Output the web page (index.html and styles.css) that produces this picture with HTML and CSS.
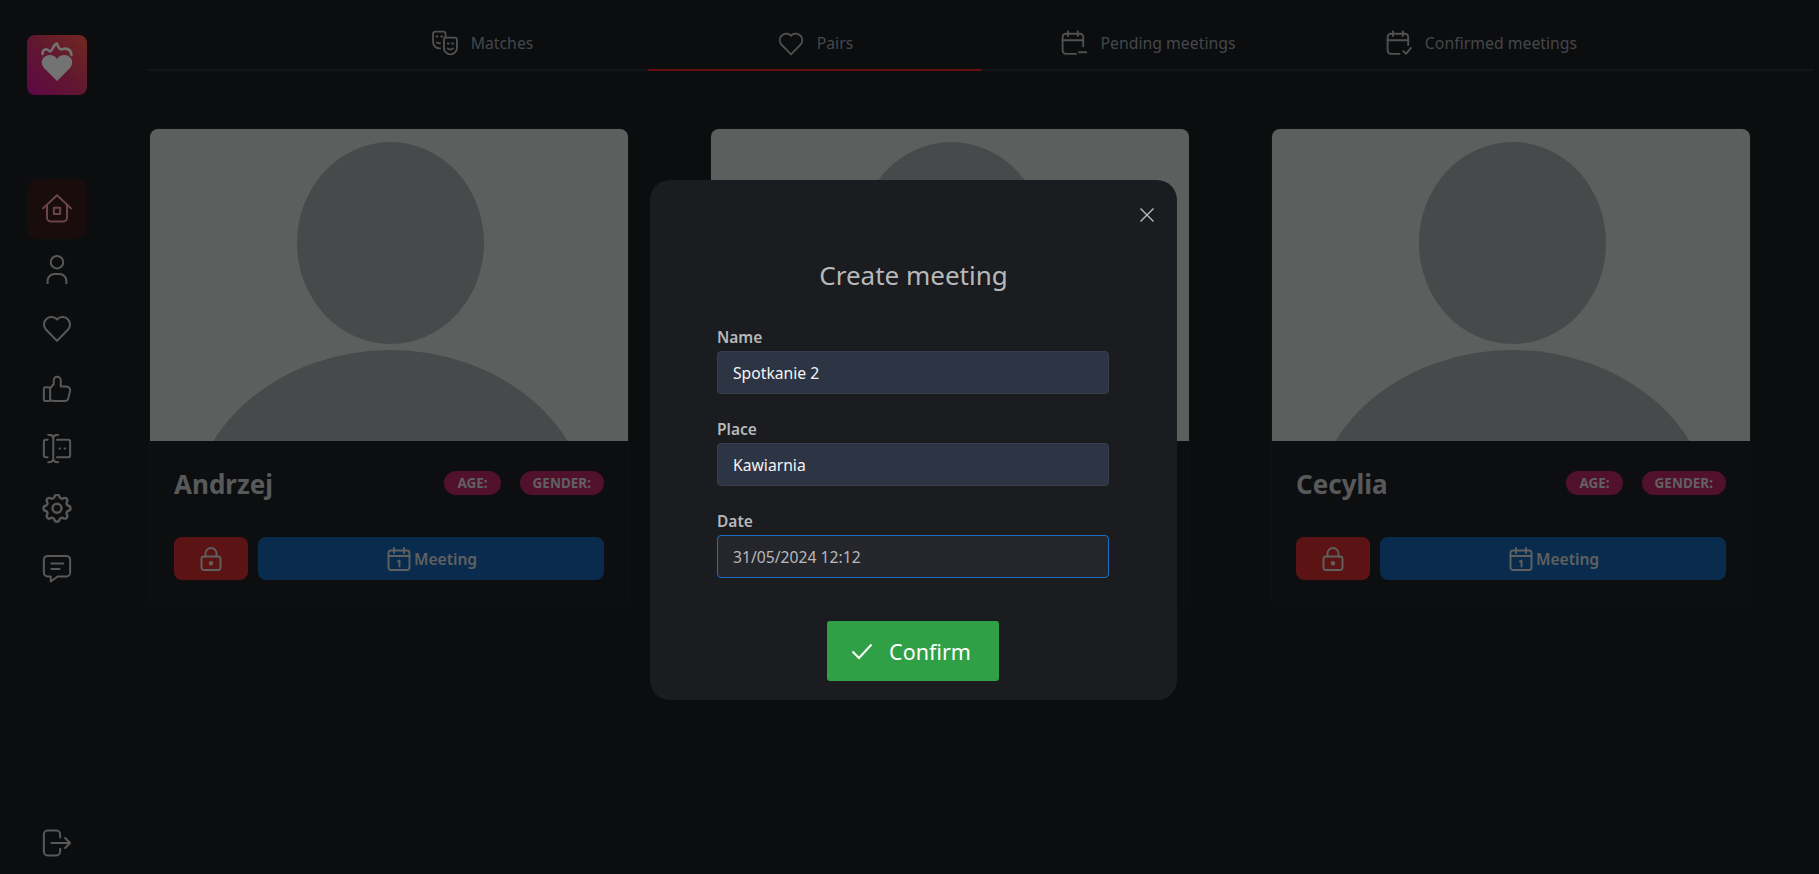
FILE: index.html
```html
<!DOCTYPE html>
<html>
<head>
    <title>Pairs</title>
    <link rel="stylesheet" href="styles.css">
</head>
<body>
    <div class="layout">
        <aside class="sidebar">
            <a class="logo">
                <svg viewBox="0 0 60 60" width="60" height="60">
                    <path class="logo-flame" d="M15.500 19C15.500 14.500 19 12.500 23 16.500C26 15.500 26 9.500 30 8.500C31 12 32 15 35 14.500C39 12.500 44 14 44.500 20"/>
                    <path class="logo-heart" d="M30 46L17 33C12 27 16 20 23 20C26 20 28 21 30 24C32 21 34 20 37 20C44 20 48 27 43 33Z"/>
                </svg>
            </a>
            <nav class="side-nav">
                <a class="side-item active">
                    <svg class="ico" viewBox="0 0 24 24"><path d="M0.800 11.500L12 1L23.200 11.500"/><path d="M4 8.500V19a3 3 0 0 0 3 3H17a3 3 0 0 0 3-3V8.500"/><rect x="9.500" y="11" width="5" height="5"/></svg>
                </a>
                <a class="side-item">
                    <svg class="ico" viewBox="0 0 24 24"><circle cx="12" cy="6.500" r="5"/><path d="M4.500 23.500V21.500a5.500 5.500 0 0 1 5.500-5.500H14a5.500 5.500 0 0 1 5.500 5.500V23.500"/></svg>
                </a>
                <a class="side-item">
                    <svg class="ico" viewBox="0 1 24 24"><path d="M12 22.500L2.800 13a6 6 0 0 1 8.400-8.400L12 5.400L12.800 4.600A6 6 0 0 1 21.200 13Z"/></svg>
                </a>
                <a class="side-item">
                    <svg class="ico" viewBox="0 0.500 24 24"><rect x="1.500" y="11" width="5" height="11" rx="1.200"/><path d="M6.500 21.500C8 22 9 22 10 22H18.500a2.500 2.500 0 0 0 2.500-2L22.500 14a3 3 0 0 0-3-3.500H15V5.500a2.800 2.800 0 0 0-5.600 0V8.500L6.500 12"/></svg>
                </a>
                <a class="side-item">
                    <svg class="ico" viewBox="0 0.500 24 24"><path d="M4.500 5H3a1.500 1.500 0 0 0-1.500 1.500V17.500A1.500 1.500 0 0 0 3 19H4.500"/><path d="M5 1C7.500 1 9 2 9 4V20C9 22 7.500 23 5 23M13 1C10.500 1 9 2 9 4M9 20C9 22 10.500 23 13 23"/><path d="M12 5H21a1.500 1.500 0 0 1 1.500 1.500V17.500A1.500 1.500 0 0 1 21 19H12"/><path d="M14 12h.5M18 12h.5"/></svg>
                </a>
                <a class="side-item">
                    <svg class="ico" viewBox="2 2.500 20 20"><path d="M10.325 4.317c.426 -1.756 2.924 -1.756 3.35 0a1.724 1.724 0 0 0 2.573 1.066c1.543 -.94 3.31 .826 2.37 2.37a1.724 1.724 0 0 0 1.065 2.572c1.756 .426 1.756 2.924 0 3.35a1.724 1.724 0 0 0 -1.066 2.573c.94 1.543 -.826 3.31 -2.37 2.37a1.724 1.724 0 0 0 -2.572 1.065c-.426 1.756 -2.924 1.756 -3.35 0a1.724 1.724 0 0 0 -2.573 -1.066c-1.543 .94 -3.31 -.826 -2.37 -2.37a1.724 1.724 0 0 0 -1.065 -2.572c-1.756 -.426 -1.756 -2.924 0 -3.35a1.724 1.724 0 0 0 1.066 -2.573c-.94 -1.543 .826 -3.31 2.37 -2.37c1 .608 2.296 .07 2.572 -1.065z"/><circle cx="12" cy="12" r="3"/></svg>
                </a>
                <a class="side-item">
                    <svg class="ico" viewBox="0 0 24 24"><path d="M4.500 1.500H19.500a3 3 0 0 1 3 3V15a3 3 0 0 1-3 3H12.500L7 22V18H4.500a3 3 0 0 1-3-3V4.500a3 3 0 0 1 3-3Z"/><path d="M7.500 7.500H17M7.500 12H14"/></svg>
                </a>
            </nav>
            <a class="side-item logout">
                <svg class="ico" viewBox="0 0 24 24"><path d="M14.500 7.500V5a3 3 0 0 0-3-3H4.500a3 3 0 0 0-3 3V19a3 3 0 0 0 3 3H11.500a3 3 0 0 0 3-3V16.500"/><path d="M7.500 12H22.500M18.500 8L22.500 12L18.500 16"/></svg>
            </a>
        </aside>

        <main class="content">
            <div class="tabs">
                <a class="tab">
                    <svg class="tab-ico" viewBox="0 0 24 24"><path d="M12.500 6V3.500a2 2 0 0 0-2-2H3a2 2 0 0 0-2 2V11a6 6 0 0 0 6.500 6"/><path d="M4 6h1M8.500 6h1M4.500 11.500c1 .8 2 1 3 .6"/><path d="M13 7H21a2 2 0 0 1 2 2V16.500a6 6 0 0 1-12 0V9a2 2 0 0 1 2-2Z"/><path d="M14.500 12.500h1M18.500 12.500h1M14.500 17c1.500 1.300 3.500 1.300 5 0"/></svg>
                    <span>Matches</span>
                </a>
                <a class="tab active">
                    <svg class="tab-ico" viewBox="0 0 24 24"><path d="M12 22.500L2.800 13a6 6 0 0 1 8.400-8.400L12 5.400L12.800 4.600A6 6 0 0 1 21.200 13Z"/></svg>
                    <span>Pairs</span>
                </a>
                <a class="tab">
                    <svg class="tab-ico" viewBox="0 0 24 24"><path d="M20.500 15V6.500a3 3 0 0 0-3-3H4.500a3 3 0 0 0-3 3V19a3 3 0 0 0 3 3H14"/><path d="M1.500 9.500H20.500M6.500 1V5.500M15.500 1V5.500M16.500 20.500H23.500"/></svg>
                    <span>Pending meetings</span>
                </a>
                <a class="tab">
                    <svg class="tab-ico" viewBox="0 0 24 24"><path d="M20.500 14V6.500a3 3 0 0 0-3-3H4.500a3 3 0 0 0-3 3V19a3 3 0 0 0 3 3H12.500"/><path d="M1.500 9.500H20.500M6.500 1V5.500M15.500 1V5.500M16 19.500L18.500 22L23 16.500"/></svg>
                    <span>Confirmed meetings</span>
                </a>
            </div>

            <div class="cards">
                <div class="card">
                    <svg class="photo" viewBox="0 0 478 312"><ellipse cx="240.500" cy="114" rx="93.500" ry="101"/><ellipse cx="240.500" cy="391" rx="200" ry="170"/></svg>
                    <div class="card-body">
                        <div class="card-head">
                            <span class="card-name">Andrzej</span>
                            <div class="badges"><span class="badge">AGE:</span><span class="badge">GENDER:</span></div>
                        </div>
                        <div class="card-actions">
                            <button class="btn btn-lock"><svg class="btn-ico" viewBox="0 0 24 24"><path d="M6.500 9.500V6.500a5.500 5.500 0 0 1 11 0V9.500"/><rect x="2.500" y="9.500" width="19" height="13.500" rx="2.500"/><circle class="dot" cx="12" cy="16.200" r="1.300"/></svg></button>
                            <button class="btn btn-meeting"><svg class="btn-ico" viewBox="0 0 24 24"><rect x="1.500" y="3.500" width="21" height="19.500" rx="2.500"/><path d="M1.500 9H22.500M7 1V6M17 1V6M11 14.500L12.500 13.500V19.500"/></svg>Meeting</button>
                        </div>
                    </div>
                </div>
                <div class="card">
                    <svg class="photo" viewBox="0 0 478 312"><ellipse cx="240.500" cy="114" rx="93.500" ry="101"/><ellipse cx="240.500" cy="391" rx="200" ry="170"/></svg>
                    <div class="card-body">
                        <div class="card-head">
                            <span class="card-name">Bartek</span>
                            <div class="badges"><span class="badge">AGE:</span><span class="badge">GENDER:</span></div>
                        </div>
                        <div class="card-actions">
                            <button class="btn btn-lock"><svg class="btn-ico" viewBox="0 0 24 24"><path d="M6.500 9.500V6.500a5.500 5.500 0 0 1 11 0V9.500"/><rect x="2.500" y="9.500" width="19" height="13.500" rx="2.500"/><circle class="dot" cx="12" cy="16.200" r="1.300"/></svg></button>
                            <button class="btn btn-meeting"><svg class="btn-ico" viewBox="0 0 24 24"><rect x="1.500" y="3.500" width="21" height="19.500" rx="2.500"/><path d="M1.500 9H22.500M7 1V6M17 1V6M11 14.500L12.500 13.500V19.500"/></svg>Meeting</button>
                        </div>
                    </div>
                </div>
                <div class="card">
                    <svg class="photo" viewBox="0 0 478 312"><ellipse cx="240.500" cy="114" rx="93.500" ry="101"/><ellipse cx="240.500" cy="391" rx="200" ry="170"/></svg>
                    <div class="card-body">
                        <div class="card-head">
                            <span class="card-name">Cecylia</span>
                            <div class="badges"><span class="badge">AGE:</span><span class="badge">GENDER:</span></div>
                        </div>
                        <div class="card-actions">
                            <button class="btn btn-lock"><svg class="btn-ico" viewBox="0 0 24 24"><path d="M6.500 9.500V6.500a5.500 5.500 0 0 1 11 0V9.500"/><rect x="2.500" y="9.500" width="19" height="13.500" rx="2.500"/><circle class="dot" cx="12" cy="16.200" r="1.300"/></svg></button>
                            <button class="btn btn-meeting"><svg class="btn-ico" viewBox="0 0 24 24"><rect x="1.500" y="3.500" width="21" height="19.500" rx="2.500"/><path d="M1.500 9H22.500M7 1V6M17 1V6M11 14.500L12.500 13.500V19.500"/></svg>Meeting</button>
                        </div>
                    </div>
                </div>
            </div>
        </main>
    </div>

    <div class="backdrop"></div>
    <div class="modal-wrap">
        <div class="modal">
            <button class="modal-close"><svg viewBox="0 0 14 14" width="14" height="14"><path d="M0.500 0.500L13.500 13.500M13.500 0.500L0.500 13.500"/></svg></button>
            <h2 class="modal-title">Create meeting</h2>
            <form class="meeting-form">
                <label class="field-label" for="meetingName">Name</label>
                <input class="field" type="text" id="meetingName" value="Spotkanie 2">
                <label class="field-label" for="meetingPlace">Place</label>
                <input class="field" type="text" id="meetingPlace" value="Kawiarnia">
                <label class="field-label" for="meetingDate">Date</label>
                <input class="field field-focus" type="text" id="meetingDate" value="31/05/2024 12:12">
                <button type="button" class="btn-confirm"><svg viewBox="0 0 22 18" width="22" height="18"><path d="M1.500 9.500L8 16L20.500 2.500"/></svg>Confirm</button>
            </form>
        </div>
    </div>
</body>
</html>
```

FILE: styles.css
```css
* {
    box-sizing: border-box;
}

body {
    margin: 0;
    height: 100vh;
    overflow: hidden;
    font-family: "Noto Sans", "Open Sans", sans-serif;
    background: #191d22;
    color: #d0d0d0;
}

.layout {
    display: flex;
    height: 100vh;
}

/* sidebar */
.sidebar {
    width: 148px;
    flex: none;
    display: flex;
    flex-direction: column;
    padding: 35px 0 1px 27px;
}

.logo {
    display: block;
    width: 60px;
    height: 60px;
    border-radius: 8px;
    background: linear-gradient(to top right, #d0109c, #d6346a 50%, #fb5a48);
}

.logo svg {
    display: block;
}

.logo-flame {
    fill: none;
    stroke: #fff;
    stroke-width: 2.500;
    stroke-linecap: round;
    stroke-linejoin: round;
}

.logo-heart {
    fill: #fff;
}

.side-nav {
    margin-top: 84px;
}

.side-item {
    width: 60px;
    height: 60px;
    display: flex;
    align-items: center;
    justify-content: center;
    border-radius: 10px;
    color: #c4c4c4;
}

.side-item.active {
    background: #361b1b;
    color: #f09c9c;
}

.logout {
    margin-top: auto;
}

.ico {
    width: 30px;
    height: 30px;
    fill: none;
    stroke: currentColor;
    stroke-width: 1.600;
    stroke-linecap: round;
    stroke-linejoin: round;
}

/* tabs */
.content {
    flex: 1;
    padding-right: 5px;
}

.tabs {
    display: flex;
    justify-content: center;
    height: 71px;
    border-bottom: 2px solid #2b2f35;
}

.tab {
    width: 333px;
    height: 71px;
    display: flex;
    align-items: center;
    justify-content: center;
    gap: 13px;
    padding: 17px 0 0 2px;
    font-size: 15.800px;
    color: #989da4;
    border-bottom: 2px solid transparent;
}

.tab.active {
    border-bottom-color: #e81f26;
}

.tab-ico {
    width: 26px;
    height: 26px;
    fill: none;
    stroke: #b4b4b4;
    stroke-width: 1.700;
    stroke-linecap: round;
    stroke-linejoin: round;
}

/* cards */
.cards {
    display: flex;
    gap: 81px;
    margin: 57px 0 0 1px;
}

.card {
    width: 480px;
    border: 1px solid #24262a;
    border-radius: 9px;
    background: #1e2024;
    overflow: hidden;
}

.photo {
    display: block;
    width: 478px;
    height: 312px;
    background: #cfd3d1;
    fill: #a0a2a4;
}

.card-body {
    padding: 20px 24px 26px;
}

.card-head {
    display: flex;
    align-items: center;
    justify-content: space-between;
    height: 44px;
    margin-bottom: 32px;
}

.card-name {
    padding-top: 2px;
    font-size: 26px;
    font-weight: 700;
    color: #c4c6c8;
}

.badges {
    display: flex;
    gap: 19px;
}

.badge {
    height: 24px;
    line-height: 24px;
    padding: 0 13px;
    border-radius: 12px;
    background: #b42462;
    font-size: 13.500px;
    font-weight: 700;
    color: #d4d4d4;
}

.card-actions {
    display: flex;
    gap: 10px;
}

.btn {
    height: 43px;
    display: flex;
    align-items: center;
    justify-content: center;
    border: none;
    border-radius: 8px;
    font-family: inherit;
    font-size: 15.600px;
    font-weight: 600;
    color: #d4d4d4;
}

.btn-lock {
    width: 74px;
    background: #ca2c2c;
}

.btn-meeting {
    flex: 1;
    gap: 3px;
    padding-left: 8px;
    background: #1260ad;
}

.btn-ico {
    width: 24px;
    height: 24px;
    fill: none;
    stroke: currentColor;
    stroke-width: 1.900;
    stroke-linecap: round;
    stroke-linejoin: round;
}

.btn-ico .dot {
    fill: currentColor;
}

/* modal */
.backdrop {
    position: fixed;
    inset: 0;
    background: rgba(0, 0, 0, 0.55);
}

.modal-wrap {
    position: fixed;
    inset: 0;
    display: flex;
    align-items: flex-start;
    justify-content: center;
    padding: 180px 0 0 8px;
}

.modal {
    position: relative;
    width: 527px;
    height: 520px;
    padding-top: 77px;
    border-radius: 20px;
    background: #1a1c20;
}

.modal-close {
    position: absolute;
    top: 28px;
    right: 23px;
    width: 14px;
    height: 14px;
    padding: 0;
    border: none;
    background: none;
}

.modal-close svg {
    display: block;
    fill: none;
    stroke: #bbbcbe;
    stroke-width: 1.400;
}

.modal-title {
    margin: 0 0 33px;
    height: 36px;
    line-height: 36px;
    text-align: center;
    font-size: 26px;
    font-weight: 400;
    color: #b7b8ba;
}

.meeting-form {
    width: 392px;
    margin: 0 0 0 67px;
    display: flex;
    flex-direction: column;
}

.field-label {
    height: 21px;
    line-height: 23px;
    margin-bottom: 4px;
    font-size: 15.500px;
    font-weight: 600;
    color: #b7b8ba;
}

.field {
    width: 100%;
    height: 43px;
    margin-bottom: 24px;
    padding: 0 15px;
    border: 1px solid #383e4d;
    border-radius: 4px;
    background: #2d3444;
    font-family: inherit;
    font-size: 15.700px;
    color: #f4f4f4;
    outline: none;
}

.field-focus {
    border-color: #1b6ec2;
    background: #24262b;
    color: #b7b8ba;
    margin-bottom: 0;
}

.btn-confirm {
    width: 172px;
    height: 60px;
    margin: 43px auto 0;
    display: flex;
    align-items: center;
    justify-content: center;
    gap: 16px;
    padding-left: 2px;
    border: none;
    border-radius: 3px;
    background: #30a046;
    font-family: inherit;
    font-size: 21.500px;
    color: #fff;
}

.btn-confirm svg {
    fill: none;
    stroke: #fff;
    stroke-width: 2;
}
```
